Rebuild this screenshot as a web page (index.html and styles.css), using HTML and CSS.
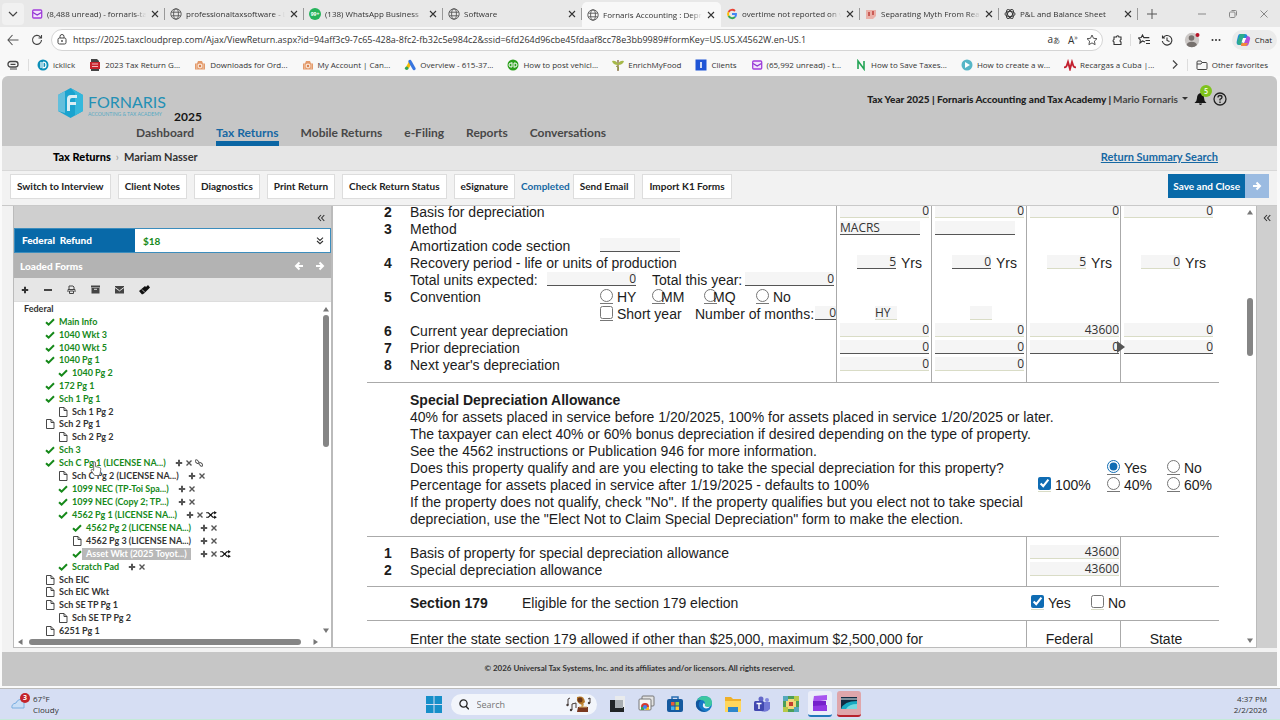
FILE: index.html
```html
<!DOCTYPE html>
<html lang="en">
<head>
<meta charset="utf-8">
<title>Fornaris Accounting : Depreciation</title>
<link rel="stylesheet" href="styles.css">
</head>
<body>
<svg class="defs" aria-hidden="true">
  <symbol id="check" viewBox="0 0 10 8"><path d="M1 4.200 3.600 6.600 9 1.200" fill="none" stroke="currentColor" stroke-width="2"/></symbol>
  <symbol id="page" viewBox="0 0 9 10"><path d="M1 .5h4.500L8.500 3.500V9.500H1zM5.500.5v3h3" fill="#fff" stroke="currentColor" stroke-width=".9"/></symbol>
  <symbol id="plus" viewBox="0 0 8 8"><path d="M4 .8v6.400M.8 4h6.400" stroke="currentColor" stroke-width="2"/></symbol>
  <symbol id="cross" viewBox="0 0 8 8"><path d="m1.500 1.500 5 5m0-5-5 5" stroke="currentColor" stroke-width="1.400"/></symbol>
  <symbol id="shuffle" viewBox="0 0 12 9"><path d="M0 2h2.500l5 5H10M0 7h2.500l5-5H10" fill="none" stroke="#111" stroke-width="1.300"/><path d="M9 0l3 2-3 2zM9 5l3 2-3 2z" fill="#111"/></symbol>
  <symbol id="link" viewBox="0 0 10 10"><rect x="-.2" y="1.800" width="5.400" height="3" rx="1.500" transform="rotate(45 2.500 3.300)" fill="none" stroke="currentColor" stroke-width="1.200"/><rect x="4.600" y="5.200" width="5.400" height="3" rx="1.500" transform="rotate(45 7.300 6.700)" fill="none" stroke="currentColor" stroke-width="1.200"/></symbol>
  <symbol id="x" viewBox="0 0 10 10"><path d="m2 2 6 6m0-6-6 6" stroke="#333" stroke-width="1.100"/></symbol>
  <symbol id="globe" viewBox="0 0 12 12"><g fill="none" stroke="#555" stroke-width=".9"><circle cx="6" cy="6" r="5.200"/><ellipse cx="6" cy="6" rx="2.400" ry="5.200"/><path d="M1.300 4.200h9.400M1.300 7.800h9.400"/></g></symbol>
  <symbol id="mail" viewBox="0 0 12 12"><rect x="1.700" y="2" width="9" height="8" rx="1" fill="#f3e3fb" stroke="#a23ddb" stroke-width="1.300"/><path d="m2 4.500 4.200 2.600 4.200-2.600" fill="none" stroke="#8c35d0" stroke-width="1.300"/></symbol>
  <symbol id="camera" viewBox="0 0 12 12"><path d="M1 4.500h2L4 2h4l1 2.500h2V10.500H1z" fill="#e39a6b"/><circle cx="6" cy="7" r="2.400" fill="#fbe7d8"/><circle cx="6" cy="7" r="1.200" fill="#d77f4d"/><path d="M2.800 5v5M9.200 5v5" stroke="#f6d2b8" stroke-width=".7"/></symbol>
  <symbol id="arrow" viewBox="0 0 10 10"><path d="M1 5h7M4.500 1.500 8 5 4.500 8.500" fill="none" stroke="currentColor" stroke-width="2"/></symbol>
  <symbol id="chev2" viewBox="0 0 8 8"><path d="M4 1 1.300 4 4 7M7.300 1 4.600 4l2.700 3" fill="none" stroke="currentColor" stroke-width="1.100"/></symbol>
  <symbol id="tri" viewBox="0 0 6 6"><path d="M3 1 6 5.500H0z" fill="#777"/></symbol>
</svg>

<header class="browser">
  <div class="tabs">
    <button class="tab-menu" aria-label="Tab actions"><svg width="10" height="8" viewBox="0 0 10 8"><path d="m1 2 4 4 4-4" fill="none" stroke="#444" stroke-width="1.200"/></svg></button>
    <div class="tab"><svg class="i12"><use href="#mail"/></svg><span>(8,488 unread) - fornaris-tax</span><svg class="i10"><use href="#x"/></svg></div>
    <div class="tab"><svg class="i12"><use href="#globe"/></svg><span>professionaltaxsoftware - Lo</span><svg class="i10"><use href="#x"/></svg></div>
    <div class="tab"><i class="wa">99+</i><span>(138) WhatsApp Business</span><svg class="i10"><use href="#x"/></svg></div>
    <div class="tab"><svg class="i12"><use href="#globe"/></svg><span>Software</span><svg class="i10"><use href="#x"/></svg></div>
    <div class="tab active"><svg class="i12"><use href="#globe"/></svg><span>Fornaris Accounting : Depre</span><svg class="i10"><use href="#x"/></svg></div>
    <div class="tab"><svg class="i12" viewBox="0 0 12 12"><g fill="none" stroke-width="1.900"><path d="M9 3A4 4 0 0 0 2.600 4" stroke="#ea4335"/><path d="M2.600 4a4 4 0 0 0 0 4" stroke="#fbbc05"/><path d="M2.600 8A4 4 0 0 0 9 9" stroke="#34a853"/><path d="M9 9a4 4 0 0 0 1-3H6" stroke="#4285f4"/></g></svg><span>overtime not reported on w2</span><svg class="i10"><use href="#x"/></svg></div>
    <div class="tab"><svg class="i12" viewBox="0 0 12 12"><path d="M1 2h10v6L8 11H1z" fill="#eab0a8"/><path d="M3 4h2v4H3zm4-1h2v4H7z" fill="#c95c56"/></svg><span>Separating Myth From Reali</span><svg class="i10"><use href="#x"/></svg></div>
    <div class="tab"><svg class="i12" viewBox="0 0 12 12"><g fill="none" stroke="#333" stroke-width=".9"><ellipse cx="6" cy="6" rx="5" ry="2.500"/><ellipse cx="6" cy="6" rx="5" ry="2.500" transform="rotate(60 6 6)"/><ellipse cx="6" cy="6" rx="5" ry="2.500" transform="rotate(120 6 6)"/></g></svg><span>P&amp;L and Balance Sheet</span><svg class="i10"><use href="#x"/></svg></div>
    <button class="new-tab" aria-label="New tab"><svg width="10" height="10" viewBox="0 0 10 10"><path d="M5 0v10M0 5h10" stroke="#555"/></svg></button>
    <div class="window-buttons">
      <button aria-label="Minimize"><svg width="8" height="8" viewBox="0 0 8 8"><path d="M0 4h8" stroke="#888"/></svg></button>
      <button aria-label="Restore"><svg width="8" height="8" viewBox="0 0 8 8"><g fill="none" stroke="#888"><rect x=".5" y="2" width="5.500" height="5.500" rx="1"/><path d="M2.500.5h4q1 0 1 1v4"/></g></svg></button>
      <button aria-label="Close"><svg width="8" height="8" viewBox="0 0 8 8"><path d="m.5.5 7 7m0-7-7 7" stroke="#888"/></svg></button>
    </div>
  </div>
  <div class="address-row">
    <button aria-label="Back"><svg width="12" height="12" viewBox="0 0 12 12"><path d="M11.500 6H1m4.500-5L1 6l4.500 5" fill="none" stroke="#555" stroke-width="1.100"/></svg></button>
    <button aria-label="Refresh"><svg width="12" height="12" viewBox="0 0 12 12"><path d="M10.500 6A4.500 4.500 0 1 1 9.300 2.800L10.500 4M10.500 1v3h-3" fill="none" stroke="#444" stroke-width="1.100"/></svg></button>
    <div class="address">
      <svg width="10" height="11" viewBox="0 0 10 11"><g fill="none" stroke="#444"><rect x="1" y="4" width="8" height="6" rx="1.500"/><path d="M3 4V2.500a2 2 0 0 1 4 0V4"/></g><circle cx="5" cy="7" r=".9" fill="#444"/></svg>
      <input type="text" aria-label="Address" value="https://2025.taxcloudprep.com/Ajax/ViewReturn.aspx?id=94aff3c9-7c65-428a-8fc2-fb32c5e984c2&amp;ssid=6fd264d96cbe45fdaaf8cc78e3bb9989#formKey=US.US.X4562W.en-US.1">
      <span class="glyph">a<small>あ</small></span><span class="glyph">A<sup>»</sup></span>
      <svg width="12" height="12" viewBox="0 0 12 12"><path d="m6 1 1.500 3.300 3.500.4-2.600 2.400.7 3.600L6 8.900l-3.100 1.800.7-3.600L1 4.700l3.500-.4z" fill="none" stroke="#555"/></svg>
    </div>
    <div class="address-tools">
      <svg width="12" height="12" viewBox="0 0 12 12"><path d="M3 3h2.500a1.200 1.200 0 0 1 2.400 0H10v2.500a1.300 1.300 0 0 0 0 2.500v2.500H3V8a1.300 1.300 0 0 1 0-2.500z" fill="none" stroke="#333" stroke-width="1.100"/></svg>
      <i class="sep"></i>
      <svg width="12" height="12" viewBox="0 0 12 12"><path d="M7 8 4.500 7 2 9l.3-3L.6 4l2.600-.4L4.500 1l1.300 2.600h5.500M7.500 6.500H12M8 9.500h4" fill="none" stroke="#333" stroke-width="1.100"/></svg>
      <svg width="12" height="12" viewBox="0 0 12 12"><path d="M1.800 4A4.800 4.800 0 1 1 1.300 7M1.500 1.500V4H4M6 3.500v3l2.500 1" fill="none" stroke="#333" stroke-width="1.100"/></svg>
      <svg width="16" height="16" viewBox="0 0 16 16"><circle cx="8" cy="8" r="7.200" fill="#ccc8c6"/><circle cx="7.500" cy="6" r="2.800" fill="#77716e"/><path d="M2.500 13a5.500 4.500 0 0 1 10.500 0 7 7 0 0 1-10.500 0" fill="#77716e"/><circle cx="13.500" cy="3" r="2" fill="#b51226"/></svg>
      <svg width="10" height="4" viewBox="0 0 10 4"><g fill="#333"><circle cx="1.500" cy="2" r="1"/><circle cx="5" cy="2" r="1"/><circle cx="8.500" cy="2" r="1"/></g></svg>
      <button class="chat"><svg width="15" height="14" viewBox="0 0 15 14"><path d="M4 1h5q2 0 2.500 2L12 5H8L6 12H3Q0 12 .8 8L2 3q.5-2 2-2" fill="#1d8bdc"/><path d="M4 1h5L6 12H4Q1 12 1 9z" fill="#34b96b" opacity=".7"/><path d="M11 3q3 0 3.200 2.500L13 10q-.6 3-3 3H6q-1.500 0-1-2l3-1z" fill="#b44fd8"/><path d="m6 10-1 1q-.5 2 1 2h4l2-3z" fill="#f28a3d"/><path d="M7 5h3L8 9.500H5.500z" fill="#fff"/></svg>Chat</button>
    </div>
  </div>
  <nav class="bookmarks" aria-label="Favorites">
    <svg width="12" height="10" viewBox="0 0 12 10"><rect x="1" y="1.500" width="10" height="5.500" rx="2.500" fill="none" stroke="#444" stroke-width="1.300"/><path d="M3.500 4.300h5M3 9h7" stroke="#444" stroke-width="1.200"/></svg>
    <i class="sep"></i>
    <a href="#"><svg class="i12" viewBox="0 0 12 12"><circle cx="6" cy="6" r="5.500" fill="#0c8fb8"/><path d="M4 3v6M6 3v6q3 0 3-3t-3-3" fill="none" stroke="#fff" stroke-width="1.200"/></svg>icklick</a>
    <a href="#"><svg class="i12" viewBox="0 0 12 12"><path d="M2 0h6l2 2v10H2z" fill="#444"/><path d="M1 3h10v7H1z" fill="#c8232c"/><path d="M3 5h6M3 7.500h6" stroke="#f2b5b8"/></svg>2023 Tax Return G...</a>
    <a href="#"><svg class="i12"><use href="#camera"/></svg>Downloads for Ord...</a>
    <a href="#"><svg class="i12"><use href="#camera"/></svg>My Account | Can...</a>
    <a href="#"><svg class="i12" viewBox="0 0 12 12"><path d="M6.500 3 3.500 8.500" stroke="#fbbc04" stroke-width="3.200"/><path d="m6 2.500 4 7" stroke="#3775e0" stroke-width="3.200" stroke-linecap="round"/><circle cx="2.700" cy="9.200" r="1.800" fill="#34a853"/></svg>Overview - 615-37...</a>
    <a href="#"><svg class="i12" viewBox="0 0 12 12"><circle cx="6" cy="6" r="5.500" fill="#2ca01c"/><path d="M5 4H4a2 2 0 0 0 0 4h1V3.500M7 8h1a2 2 0 0 0 0-4H7v4.500" fill="none" stroke="#fff"/></svg>How to post vehicl...</a>
    <a href="#"><svg class="i12" viewBox="0 0 12 12"><path d="M6 1v11" stroke="#795a2b" stroke-width="1.200"/><path d="M0 2q4-1 6 3 2-4 6-3-1 4-6 4-5 0-6-4" fill="#a6b94a"/><path d="M4 7q4 1 2 4" stroke="#8a9a32" fill="none"/></svg>EnrichMyFood</a>
    <a href="#"><svg class="i12" viewBox="0 0 12 12"><path d="M.5.5h11v11H.5z" fill="#1f55d6"/><path d="M6 3v6" stroke="#fff" stroke-width="1.600"/></svg>Clients</a>
    <a href="#"><svg class="i12"><use href="#mail"/></svg>(65,992 unread) - t...</a>
    <a href="#"><svg class="i12" viewBox="0 0 12 12"><path d="M3 10V2l6 8V2" fill="none" stroke="#23a455" stroke-width="1.600"/></svg>How to Save Taxes...</a>
    <a href="#"><svg class="i12" viewBox="0 0 12 12"><circle cx="6" cy="6" r="5.500" fill="#56b6c7"/><path d="m4 3 5 3-5 3z" fill="#fff"/></svg>How to create a w...</a>
    <a href="#"><svg class="i12" viewBox="0 0 12 12"><path d="M0 8q2 1 3-2l1-3 2 7 2-7 1 3q1 3 3 2" fill="none" stroke="#c3202f" stroke-width="1.900"/></svg>Recargas a Cuba |...</a>
    <svg class="more" width="6" height="9" viewBox="0 0 6 9"><path d="m1 .5 4 4-4 4" fill="none" stroke="#444" stroke-width="1.200"/></svg>
    <i class="sep"></i>
    <a href="#"><svg class="i12" viewBox="0 0 12 12"><path d="M1 3q0-1 1-1h3l1 1.500h4q1 0 1 1V9.500q0 1-1 1H2q-1 0-1-1zM1 5h4l1-1.500" fill="none" stroke="#444"/></svg>Other favorites</a>
  </nav>
</header>

<main class="app">
  <header class="app-head">
    <div class="brand-row">
      <div class="brand">
        <svg width="27" height="30" viewBox="0 0 27 30"><path d="M13.500 0 26 7v16l-12.500 7L1 23V7z" fill="#1aa3cf"/><path d="M13.500 0 26 7v16l-8 4.500V5z" fill="#35b8dc"/><path d="M1 7 8 3v22l-7-2z" fill="#63bfdc"/><path d="M10 23V11q0-4 4-4h6v3h-5q-2 0-2 2v2h6v3h-6v6z" fill="#d9eef5"/></svg>
        <div class="brand-text"><strong>FORNARIS</strong><small>ACCOUNTING &amp; TAX ACADEMY</small></div>
        <b class="year">2025</b>
      </div>
      <div class="account"><b>Tax Year 2025 | Fornaris Accounting and Tax Academy |</b><button>Mario Fornaris <svg width="6" height="4" viewBox="0 0 6 4"><path d="M0 0h6L3 3z" fill="#333"/></svg></button>
        <button class="bell" aria-label="Notifications"><svg width="13" height="14" viewBox="0 0 13 14"><path d="M6.500 1Q10 2 10 6q0 3 2.500 5H.5Q3 9 3 6q0-4 3.500-5M4.800 11.500h3.400q-1.700 3-3.400 0" fill="#161616"/></svg><span>5</span></button>
        <button aria-label="Help"><svg width="14" height="14" viewBox="0 0 14 14"><circle cx="7" cy="7" r="6" fill="none" stroke="#222" stroke-width="1.300"/><path d="M5 5.500q0-2 2-2t2 1.700Q9 6.500 7 7.300v1.200M7 9.500V11" fill="none" stroke="#222" stroke-width="1.300"/></svg></button>
      </div>
    </div>
    <nav class="main-nav"><a href="#">Dashboard</a><a href="#" class="current">Tax Returns</a><a href="#">Mobile Returns</a><a href="#">e-Filing</a><a href="#">Reports</a><a href="#">Conversations</a></nav>
  </header>
  <div class="crumbs"><span><b>Tax Returns</b><i>›</i>Mariam Nasser</span><a href="#">Return Summary Search</a></div>
  <div class="actions">
    <button>Switch to Interview</button><button>Client Notes</button><button>Diagnostics</button><button>Print Return</button><button>Check Return Status</button><button>eSignature</button><span class="done">Completed</span><button>Send Email</button><button>Import K1 Forms</button>
    <div class="save"><button>Save and Close</button><button class="next" aria-label="Next"><svg class="i10"><use href="#arrow"/></svg></button></div>
  </div>

  <div class="work">
    <aside class="side">
      <div class="collapse"><button aria-label="Collapse"><svg class="i8"><use href="#chev2"/></svg></button></div>
      <div class="refund"><b>Federal&nbsp; Refund</b><span>$18</span><svg class="i8 down"><use href="#chev2"/></svg></div>
      <div class="loaded"><b>Loaded Forms</b><svg class="i10 flip"><use href="#arrow"/></svg><svg class="i10"><use href="#arrow"/></svg></div>
      <div class="tools">
        <button aria-label="Add"><svg class="i8"><use href="#plus"/></svg></button>
        <button aria-label="Remove"><svg class="i8" viewBox="0 0 8 8"><path d="M0 4h8" stroke="#444" stroke-width="2"/></svg></button>
        <button aria-label="Print"><svg class="i9" viewBox="0 0 9 9"><path d="M2 4V1h4l1 1v2M1 7V4.500h7V7M2.500 6h4v2.500h-4z" fill="none" stroke="#444"/></svg></button>
        <button aria-label="Archive"><svg class="i9" viewBox="0 0 9 9"><path d="M0 .5h9v2H0zM.5 3h8v5.500h-8z" fill="#444"/><path d="M3 4.300h3" stroke="#ddd"/></svg></button>
        <button aria-label="Mail"><svg class="i9" viewBox="0 0 9 9"><path d="M0 1h9v7.500H0z" fill="#444"/><path d="m0 2.500 4.500 3.300L9 2.500" fill="none" stroke="#e6e6e6"/></svg></button>
        <button aria-label="Erase"><svg width="11" height="11" viewBox="0 0 11 11"><path d="M0 7 6 2l1 1 2-2 2 2.500-6 6-2 1z" fill="#111"/><path d="m3 5.500 3 3" stroke="#ddd" stroke-width=".8"/></svg></button>
      </div>
      <div class="tree-wrap">
        <ul class="tree">
          <li class="root">Federal</li>
          <li class="ok"><svg><use href="#check"/></svg>Main Info</li>
          <li class="ok"><svg><use href="#check"/></svg>1040 Wkt 3</li>
          <li class="ok"><svg><use href="#check"/></svg>1040 Wkt 5</li>
          <li class="ok"><svg><use href="#check"/></svg>1040 Pg 1</li>
          <li class="ok l2"><svg><use href="#check"/></svg>1040 Pg 2</li>
          <li class="ok"><svg><use href="#check"/></svg>172 Pg 1</li>
          <li class="ok"><svg><use href="#check"/></svg>Sch 1 Pg 1</li>
          <li class="l2"><svg><use href="#page"/></svg>Sch 1 Pg 2</li>
          <li><svg><use href="#page"/></svg>Sch 2 Pg 1</li>
          <li class="l2"><svg><use href="#page"/></svg>Sch 2 Pg 2</li>
          <li class="ok"><svg><use href="#check"/></svg>Sch 3</li>
          <li class="ok t"><svg><use href="#check"/></svg>Sch C Pg 1 (LICENSE NA...)<span><svg><use href="#plus"/></svg><svg><use href="#cross"/></svg><svg><use href="#link"/></svg></span>
            <svg class="hand" viewBox="0 0 12 16"><path d="M3.500 10V2q0-1.200 1-1.200T5.500 2v4l4 .8q1.800.4 1.600 2L10.500 13l-1 2.500h-5L1 10.500q-.6-1.200.5-1.500t2 1" fill="#fff" stroke="#666"/></svg></li>
          <li class="l2 t"><svg><use href="#page"/></svg>Sch C Pg 2 (LICENSE NA...)<span><svg><use href="#plus"/></svg><svg><use href="#cross"/></svg></span></li>
          <li class="ok l2 t"><svg><use href="#check"/></svg>1099 NEC (TP-Toi Spa...)<span><svg><use href="#plus"/></svg><svg><use href="#cross"/></svg></span></li>
          <li class="ok l2 t"><svg><use href="#check"/></svg>1099 NEC (Copy 2; TP...)<span><svg><use href="#plus"/></svg><svg><use href="#cross"/></svg></span></li>
          <li class="ok l2 t"><svg><use href="#check"/></svg>4562 Pg 1 (LICENSE NA...)<span><svg><use href="#plus"/></svg><svg><use href="#cross"/></svg><svg class="wide"><use href="#shuffle"/></svg></span></li>
          <li class="ok l3 t"><svg><use href="#check"/></svg>4562 Pg 2 (LICENSE NA...)<span><svg><use href="#plus"/></svg><svg><use href="#cross"/></svg></span></li>
          <li class="l3 t"><svg><use href="#page"/></svg>4562 Pg 3 (LICENSE NA...)<span><svg><use href="#plus"/></svg><svg><use href="#cross"/></svg></span></li>
          <li class="ok l3 t"><svg><use href="#check"/></svg><mark>Asset Wkt (2025 Toyot...)</mark><span><svg><use href="#plus"/></svg><svg><use href="#cross"/></svg><svg class="wide"><use href="#shuffle"/></svg></span></li>
          <li class="ok l2 t"><svg><use href="#check"/></svg>Scratch Pad<span><svg><use href="#plus"/></svg><svg><use href="#cross"/></svg></span></li>
          <li><svg><use href="#page"/></svg>Sch EIC</li>
          <li><svg><use href="#page"/></svg>Sch EIC Wkt</li>
          <li><svg><use href="#page"/></svg>Sch SE TP Pg 1</li>
          <li class="l2"><svg><use href="#page"/></svg>Sch SE TP Pg 2</li>
          <li><svg><use href="#page"/></svg>6251 Pg 1</li>
        </ul>
        <div class="vbar"><svg class="i6"><use href="#tri"/></svg><i class="thumb side-thumb"></i><svg class="i6 half"><use href="#tri"/></svg></div>
      </div>
      <div class="hbar"><svg class="i6 left"><use href="#tri"/></svg><i></i><svg class="i6 right"><use href="#tri"/></svg></div>
    </aside>

    <section class="pane">
      <form class="sheet">
        <div class="block asset">
          <div class="row"><b>2</b><span>Basis for depreciation</span><div><input class="calc" aria-label="Basis 1" value="0"></div><div><input class="calc" aria-label="Basis 2" value="0"></div><div><input class="calc" aria-label="Basis 3" value="0"></div><div><input class="calc" aria-label="Basis 4" value="0"></div></div>
          <div class="row"><b>3</b><span>Method</span><div><input class="text" aria-label="Method 1" value="MACRS"></div><div><input class="text" aria-label="Method 2"></div><div></div><div></div></div>
          <div class="row"><b></b><span><label class="w190" for="amort">Amortization code section</label><input class="w80" id="amort"></span><div></div><div></div><div></div><div></div></div>
          <div class="row"><b>4</b><span>Recovery period - life or units of production</span><div class="yrs"><input id="y1" value="5"><label for="y1">Yrs</label></div><div class="yrs"><input id="y2" value="0"><label for="y2">Yrs</label></div><div class="yrs"><input class="calc" id="y3" value="5"><label for="y3">Yrs</label></div><div class="yrs"><input class="calc" id="y4" value="0"><label for="y4">Yrs</label></div></div>
          <div class="row"><b></b><span><label class="w137" for="units">Total units expected:</label><input id="units" value="0"><label class="this-year" for="ty">Total this year:</label><input id="ty" value="0"></span><div></div><div></div><div></div><div></div></div>
          <div class="row"><b>5</b><span><span class="w190">Convention</span><label class="opt"><input type="radio" name="conv">HY</label><label class="opt tight"><input type="radio" name="conv">MM</label><label class="opt tight"><input type="radio" name="conv">MQ</label><label class="opt"><input type="radio" name="conv">No</label></span><div></div><div></div><div></div><div></div></div>
          <div class="row"><b></b><span class="short"><label class="opt"><input type="checkbox">Short year</label><label for="months">Number of months:</label><input class="w20" id="months" value="0"></span><div class="code"><input class="calc" aria-label="Convention 1" value="HY"></div><div class="code"><input class="calc" aria-label="Convention 2"></div><div></div><div></div></div>
          <div class="row"><b>6</b><span>Current year depreciation</span><div><input class="calc" aria-label="Current 1" value="0"></div><div><input class="calc" aria-label="Current 2" value="0"></div><div><input class="calc" aria-label="Current 3" value="43600"></div><div><input class="calc" aria-label="Current 4" value="0"></div></div>
          <div class="row"><b>7</b><span>Prior depreciation</span><div><input aria-label="Prior 1" value="0"></div><div><input aria-label="Prior 2" value="0"></div><div><input aria-label="Prior 3" value="0"><i class="marker"></i></div><div><input aria-label="Prior 4" value="0"></div></div>
          <div class="row last"><b>8</b><span>Next year's depreciation</span><div><input class="calc" aria-label="Next 1" value="0"></div><div><input class="calc" aria-label="Next 2" value="0"></div><div></div><div></div></div>
        </div>
        <div class="block special">
          <h2>Special Depreciation Allowance</h2>
          <p>40% for assets placed in service before 1/20/2025, 100% for assets placed in service 1/20/2025 or later.</p>
          <p>The taxpayer can elect 40% or 60% bonus depreciation if desired depending on the type of property.</p>
          <p>See the 4562 instructions or Publication 946 for more information.</p>
          <div class="choice"><span>Does this property qualify and are you electing to take the special depreciation for this property?</span><i></i><label class="opt"><input type="radio" name="q" checked>Yes</label><label class="opt"><input type="radio" name="q">No</label></div>
          <div class="choice"><span>Percentage for assets placed in service after 1/19/2025 - defaults to 100%</span><label class="opt light"><input type="checkbox" checked>100%</label><label class="opt"><input type="radio" name="pct">40%</label><label class="opt"><input type="radio" name="pct">60%</label></div>
          <p>If the property does not qualify, check "No". If the property qualifies but you elect not to take special</p>
          <p>depreciation, use the "Elect Not to Claim Special Depreciation" form to make the election.</p>
        </div>
        <div class="block basis">
          <div class="row2 first"><b>1</b><span>Basis of property for special depreciation allowance</span><div><input class="calc" aria-label="Basis of property" value="43600"></div><div></div></div>
          <div class="row2 last"><b>2</b><span>Special depreciation allowance</span><div><input class="calc" aria-label="Special allowance" value="43600"></div><div></div></div>
        </div>
        <div class="block s179"><b>Section 179</b><span>Eligible for the section 179 election</span><label class="opt light"><input type="checkbox" checked>Yes</label><label class="opt light"><input type="checkbox">No</label></div>
        <div class="state-row row2"><b></b><span>Enter the state section 179 allowed if other than $25,000, maximum $2,500,000 for</span><div>Federal</div><div>State</div></div>
      </form>
      <div class="vbar"><svg class="i6"><use href="#tri"/></svg><i class="thumb pane-thumb"></i><svg class="i6 half"><use href="#tri"/></svg></div>
    </section>
    <aside class="rail"><button aria-label="Expand"><svg class="i8"><use href="#chev2"/></svg></button></aside>
  </div>
  <footer>© 2026 Universal Tax Systems, Inc. and its affiliates and/or licensors. All rights reserved.</footer>
</main>

<div class="taskbar">
  <div class="weather"><div class="cloud"><svg width="20" height="18" viewBox="0 0 20 18"><path d="M1 15q-1-4 4-5 2-5 8-3v8z" fill="#c9def6" stroke="#7aaee0"/></svg><b>3</b></div><span>67°F<br>Cloudy</span></div>
  <div class="apps">
    <svg width="16" height="17" viewBox="0 0 16 17"><path d="M0 0h7.500v8H0zM8.500 0H16v8H8.500zM0 9h7.500v8H0zM8.500 9H16v8H8.500z" fill="#168fc9"/></svg>
    <div class="search"><svg width="10" height="11" viewBox="0 0 10 11"><circle cx="4.500" cy="4.500" r="3.600" fill="none" stroke="#222" stroke-width="1.300"/><path d="m7 7.200 2.800 3.200" stroke="#222" stroke-width="1.400"/></svg><input type="text" aria-label="Search" placeholder="Search"><svg width="26" height="18" viewBox="0 0 26 18"><path d="M2 10V4l2-1M6 15V9l4-1v5M24 8V3l-2 1" fill="none" stroke="#443a38"/><circle cx="1.500" cy="10" r="1.200" fill="#443a38"/><circle cx="5" cy="15" r="1.200" fill="#443a38"/><circle cx="23" cy="8" r="1.200" fill="#443a38"/><path d="M11 2q7-2 8 5l-3 3q-6-2-5-8" fill="#b77928"/><circle cx="14" cy="5" r="2.500" fill="#6b3719"/><path d="m17 9-1 3" stroke="#c99544" stroke-width="2"/><path d="M12 12h10v5H11z" fill="#7b3820"/><path d="M13 12h8" stroke="#d9b06d"/></svg></div>
    <svg viewBox="0 0 18 18"><path d="M7 1h10v13H7z" fill="#e9ebed"/><path d="M2 5h5v7h9v5H2z" fill="#202326"/><path d="M7 5h8v8H7z" fill="#a8adb1"/></svg>
    <svg viewBox="0 0 18 18"><rect x="5" y="1" width="12" height="10" rx="1" fill="#e3e3e3" stroke="#777"/><rect x="2" y="4" width="12" height="11" rx="1" fill="#f7f7f7" stroke="#777"/><path d="M4 12a4 4 0 0 1 8 0z" fill="#d33a2f"/><path d="M4 12h3v3H4z" fill="#3aa757"/><path d="M9 12h3v3H9z" fill="#f3b91f"/><circle cx="8" cy="12" r="2" fill="#4285f4"/></svg>
    <svg viewBox="0 0 18 18"><path d="M6 5V2h6v3" fill="none" stroke="#2b6fb2" stroke-width="1.500"/><rect x="1" y="4" width="16" height="13" rx="2" fill="#15599f"/><path d="M5 7h3.500v3.500H5z" fill="#e95939"/><path d="M9.500 7H13v3.500H9.500z" fill="#8fce3f"/><path d="M5 11.500h3.500V15H5z" fill="#43b4ef"/><path d="M9.500 11.500H13V15H9.500z" fill="#f8cb3b"/></svg>
    <svg viewBox="0 0 18 18"><circle cx="9" cy="9" r="8" fill="#1679c7"/><path d="M1 8Q3 1 9 1q8 0 8 7 0 4-5 4-3 0-2-3 0-4-4-4-3 0-5 3" fill="#3dc7a1"/><path d="M6 5q-4 4-1 8 3 4 8 3-5 2-9-1-4-3-3-8 2-3 5-2" fill="#12549e"/><path d="M10 9q-1 3 3 3l2-.5q-1 2-4 2-4-1-3-4 0-2 2-.5" fill="#e7f2fb"/></svg>
    <svg viewBox="0 0 18 18"><path d="M1 2h6l2 2h8v13H1z" fill="#eeb02b"/><path d="M1 6h16v11H1z" fill="#ffd65c"/><path d="M4 12h10v5H4z" fill="#2d86cb"/></svg>
    <svg viewBox="0 0 18 18"><circle cx="8" cy="4" r="2.500" fill="#6368c8"/><circle cx="14" cy="5" r="2" fill="#8288df"/><path d="M4 7h13v7q-3 4-9 2z" fill="#7379d6"/><rect x="1" y="6" width="10" height="10" rx="1.500" fill="#4148b0"/><path d="M3.500 8.500h5M6 8.500V14" stroke="#fff" stroke-width="1.400"/></svg>
    <svg viewBox="0 0 18 18"><path d="M1 1h16v16H1z" fill="#4b9f58"/><path d="M1 1h5v5H1zM12 12h5v5h-5z" fill="#55a9bc"/><path d="M12 1h5v5h-5zM1 12h5v5H1z" fill="#b7c948"/><path d="M6 4h6v10H6zM4 6h10v6H4z" fill="#f2d77b"/><path d="M7 7h4v4H7z" fill="#c33f31"/></svg>
    <div class="app-on"><svg viewBox="0 0 18 18"><path d="M3 2 16 1v5L2 8z" fill="#a855ef"/><path d="M2 7h13v5H2z" fill="#7421cb"/><path d="m2 12 14-1v6H2z" fill="#9139e4"/></svg></div>
    <div class="app-on red"><svg viewBox="0 0 18 18"><path d="M1 3h16v12H1z" fill="#112c43"/><path d="M1 15q3-8 16-8v8z" fill="#18a9c2"/><path d="M6 15q3-5 11-5v5z" fill="#75dae0"/><path d="M1 5h16" stroke="#e8f1f4"/></svg></div>
  </div>
  <div class="clock">4:37 PM<br>2/2/2026</div>
</div>
</body>
</html>
```
FILE: styles.css
```css
* { box-sizing: border-box; }
body { margin: 0; min-height: 100vh; height: 100vh; display: flex; flex-direction: column; background: #fafafa; font-family: "Open Sans", "Noto Sans", sans-serif; font-size: 8px; color: #333; overflow: hidden; }
button { border: 0; padding: 0; background: none; font: inherit; color: inherit; display: inline-flex; align-items: center; justify-content: center; }
input { font: inherit; color: inherit; border: 0; outline: 0; background: none; padding: 0; margin: 0; min-width: 0; border-radius: 0; }
a { color: inherit; text-decoration: none; }
svg { flex: none; display: block; }
.defs { position: absolute; width: 0; height: 0; }
.i12 { width: 12px; height: 12px; }
.i10 { width: 10px; height: 10px; }
.i9 { width: 9px; height: 9px; }
.i8 { width: 8px; height: 8px; }
.i6 { width: 6px; height: 6px; }
.flip, .half { transform: rotate(180deg); }
.down, .left { transform: rotate(-90deg); }
.right { transform: rotate(90deg); }
.sep { width: 1px; height: 12px; background: #ddd; }

/* Browser chrome */
.browser { flex: none; }
.tabs { display: flex; align-items: center; height: 27px; background: #e8e8e8; padding: 0 8px 0 2px; }
.tab-menu { width: 22px; height: 22px; border-radius: 4px; background: #f1f1f1; margin-right: 2px; }
.tab { flex: 0 1 139px; min-width: 0; height: 24px; display: flex; align-items: center; gap: 4px; padding: 0 5px; }
.tab:not(.active) { background: linear-gradient(#999, #999) right center / 1px 12px no-repeat; }
.tab span { flex: 1; min-width: 0; white-space: nowrap; overflow: hidden; mask-image: linear-gradient(90deg, #000 88%, transparent); }
.tab.active { background: #f8f8f8; border-radius: 5px 5px 0 0; height: 25px; align-self: flex-end; }
.wa { width: 12px; height: 12px; border-radius: 6px; background: #25b35a; color: #fff; font: bold 5px/12px "Open Sans", sans-serif; text-align: center; }
.new-tab { width: 28px; height: 24px; }
.window-buttons { margin-left: auto; display: flex; gap: 23px; padding-right: 4px; }
.address-row { display: flex; align-items: center; height: 26px; background: #f8f8f8; padding: 0 3px 1px 7px; gap: 12px; }
.address { flex: 1; display: flex; align-items: center; gap: 8px; height: 22px; padding: 0 4px 0 5px; border: 1px solid #d5d5d5; border-radius: 11px; background: #fff; margin: 0 -4px; }
.address input { flex: 1; font-size: 9px; }
.address svg:first-child { margin-right: -2px; }
.glyph { font-size: 10px; line-height: 12px; }
.glyph small { font-family: "Noto Sans CJK JP", sans-serif; font-size: 7px; }
.glyph sup { font-size: 7px; line-height: 0; }
.address-tools { display: flex; align-items: center; gap: 11px; }
.address-tools .sep { margin: 0 -4px; }
.chat { gap: 4px; height: 20px; padding: 0 5px 0 4px; border-radius: 10px; background: #ebebeb; color: #222; }
.bookmarks { display: flex; align-items: center; height: 23px; padding: 0 12px 0 7px; background: #f8f8f8; gap: 14px; white-space: nowrap; }
.bookmarks a { display: flex; align-items: center; gap: 4px; }
.bookmarks > .sep { margin: 0 -6px 0 -5px; }
.bookmarks .more { margin-left: auto; }

/* Application frame */
.app { flex: 1; min-height: 0; display: flex; flex-direction: column; margin: 0 3px 0 2px; background: #f2f2f2; border-radius: 6px 6px 0 0; overflow: hidden; font-family: Lato, "Open Sans", sans-serif; font-size: 10px; }
.app-head { background: #c6c6c6; padding: 0 50px; }
.brand-row { display: flex; justify-content: space-between; height: 48px; }
.brand { display: flex; align-items: flex-end; gap: 4px; padding: 0 0 0 5px; }
.brand > svg { margin-bottom: 6px; }
.brand-text { display: flex; flex-direction: column; margin-bottom: 7px; color: #2390b5; }
.brand-text strong { font-weight: 400; font-size: 16px; line-height: 18px; }
.brand-text small { font-size: 5px; line-height: 6px; color: #55a9c4; }
.year { font-size: 12px; line-height: 14px; color: #161616; margin-left: 4px; }
.account { display: flex; align-items: center; height: 45px; gap: 4px; font-weight: 700; color: #444; }
.account b { color: #222; }
.account > b { margin-right: -2px; }
.account button { gap: 4px; }
.bell { position: relative; margin: 0 2px; }
.bell span { position: absolute; left: 6px; top: -7px; width: 12px; height: 12px; border-radius: 6px; background: #7fc31c; color: #fff; font-size: 7px; line-height: 12px; }
.main-nav { display: flex; gap: 22px; padding-left: 84px; font-size: 12px; font-weight: 700; line-height: 17px; color: #484848; }
.main-nav a { height: 22px; }
.main-nav .current { color: #1668a3; border-bottom: 5px solid #0b66a4; }
.crumbs { display: flex; justify-content: space-between; align-items: center; height: 25px; padding: 0 59px 3px 51px; background: #e6e6e6; border-bottom: 1px solid #d8d8d8; font-size: 11px; font-weight: 700; color: #333; }
.crumbs b { color: #000; }
.crumbs i { font-style: normal; color: #999; margin: 0 5px; font-weight: 400; }
.crumbs a { color: #1668a3; text-decoration: underline; }
.actions { display: flex; align-items: center; gap: 7px; height: 35px; padding: 0 8px 4px; color: #222; font-weight: 700; border-bottom: 1px solid #c9c9c9; white-space: nowrap; }
.actions > button { height: 25px; padding: 0 6px; background: #fff; border: 1px solid #ddd; }
.done { color: #1668a3; margin: 0 -4px 0 -1px; }
.save { margin-left: auto; display: flex; height: 24px; color: #fff; }
.save button { background: #0869a8; padding: 0 5px; }
.save .next { background: #9bbbe1; width: 24px; }

.work { flex: 1; min-height: 0; display: flex; }
.side { flex: 0 0 320px; margin-left: 11px; display: flex; flex-direction: column; border: 1px solid #bbb; border-width: 0 2px 1px 1px; background: #fff; font-weight: 700; }
.collapse { display: flex; justify-content: flex-end; height: 22px; padding-right: 6px; background: #cfcfcf; }
.refund { display: flex; align-items: center; height: 25px; border: 1px solid #3c8dbd; padding-right: 6px; }
.refund b { width: 120px; align-self: stretch; padding-left: 7px; line-height: 22px; background: #0869a8; color: #fff; }
.refund span { flex: 1; padding-left: 8px; color: #16891a; }
.loaded { display: flex; align-items: center; gap: 11px; height: 25px; padding: 0 6px; background: #b3b3b3; color: #fff; }
.loaded b { flex: 1; }
.tools { display: flex; align-items: center; gap: 15px; height: 24px; padding: 0 7px; background: #e6e6e6; border-bottom: 1px solid #ddd; }
.tree-wrap { flex: 1; min-height: 0; display: flex; padding-top: 1px; }
.tree { flex: 1; list-style: none; margin: 0; padding: 0 0 0 31px; display: flex; flex-direction: column; max-height: 335px; font-size: 9px; }
.tree li { position: relative; flex: 1 1 12px; display: flex; align-items: center; gap: 4px; line-height: 12px; white-space: nowrap; }
.tree li > svg { width: 10px; height: 10px; }
.tree .t { flex: 0 0 13px; }
.tree .root { margin-left: -21px; }
.tree .ok { color: #16891a; }
.tree .ok > svg { height: 8px; }
.tree .l2 { margin-left: 13px; }
.tree .l3 { margin-left: 27px; }
.tree li span { display: flex; gap: 2px; margin-left: 5px; color: #555; }
.tree li span svg { width: 8px; height: 8px; }
.tree li span .wide { width: 11px; }
.tree mark { margin-left: -4px; padding: 0 4px; background: #b8b8b8; color: #fff; }
.tree li > .hand { position: absolute; left: 45px; top: 5px; width: 12px; height: 15px; z-index: 1; }
.vbar { width: 12px; display: flex; flex-direction: column; align-items: center; padding: 3px 0; }
.side .vbar { width: 10px; }
.thumb { width: 6px; border-radius: 3px; background: #858585; }
.side-thumb { height: 132px; margin: 3px 0 auto; }
.hbar { display: flex; align-items: center; gap: 6px; height: 10px; padding: 0 12px 0 3px; }
.hbar i { flex: 1; height: 6px; border-radius: 3px; background: #858585; margin-right: 6px; }

/* Depreciation worksheet */
.pane { flex: 1; min-width: 0; display: flex; background: #fff; border-bottom: 1px solid #bbb; overflow: hidden; }
.pane-thumb { height: 58px; margin: 83px 0 auto; }
.sheet { flex: 1; min-width: 0; margin: -2px 25px 0 34px; font: 14px/17px "Liberation Sans", Arial, sans-serif; color: #1c1c1c; }
.sheet input { height: 14px; width: 89px; font: 12px/13px "Open Sans", sans-serif; text-align: right; background: #f5f5f5; border-bottom: 1px solid #555; color: #333; }
.sheet input.calc { border-bottom-color: #d9dcc6; }
.block { border-bottom: 1px solid #aaa; }
.row { display: grid; grid-template-columns: 43px minmax(0, 1fr) 95px 95px 94px 99px; height: 17px; }
.row2 { display: grid; grid-template-columns: 43px minmax(0, 1fr) 94px 99px; height: 17px; }
.row > b, .row2 > b { padding-left: 17px; }
.row > span, .row2 > span { display: flex; white-space: nowrap; }
.row > div, .row2 > div { position: relative; border-left: 1px solid #aaa; padding-left: 3px; display: flex; align-items: flex-start; }
.row.last { height: 25px; }
.sheet .text { width: 80px; text-align: left; }
.w190 { width: 190px; }
.w137 { width: 137px; }
.sheet .w80 { width: 80px; }
.sheet .w20 { width: 21px; }
.this-year { width: 93px; margin-left: 16px; }
.yrs { gap: 5px; }
.row > .yrs { padding-left: 20px; }
.sheet .yrs input { width: 39px; }
.row > .code { padding-left: 38px; }
.sheet .code input { width: 22px; text-align: left; }
.opt { display: flex; gap: 4px; width: 52px; white-space: nowrap; background: linear-gradient(#777, #777) 0 14px / 13px 1px no-repeat; }
.opt.light { background-image: linear-gradient(#d9dcc6, #d9dcc6); }
.sheet .opt input { width: 13px; height: 13px; accent-color: #0f6cb3; flex: none; }
.tight { gap: 0; }
.tight input { margin-right: -4px; }
.short { padding-left: 190px; }
.short .opt { width: 95px; }
.short label + input { margin-left: auto; }
.marker { position: absolute; z-index: 1; right: -5px; top: 1px; border: 6px solid transparent; border-left: 8px solid #555; border-right: 0; }
.special { padding: 9px 0 8px 43px; white-space: nowrap; }
.special h2 { margin: 0; font-size: 14px; line-height: 17px; }
.special p { margin: 0; }
.choice { display: grid; grid-template-columns: minmax(0, 1fr) 69px 60px 52px; height: 17px; }
.row2.first { height: 25px; }
.row2.first > * { padding-top: 8px; }
.row2.last { height: 24px; }
.s179 { display: grid; grid-template-columns: 112px minmax(0, 1fr) 60px 128px; padding: 8px 0 8px 43px; }
.state-row { height: 30px; line-height: 36px; }
.state-row > div { justify-content: center; padding: 0 8px 0 0; }
.rail { width: 21px; background: #cfcfcf; border-left: 1px solid #bbb; text-align: center; }
.rail button, .collapse button { height: 24px; }
.app footer { height: 34px; margin-top: 4px; background: #c6c6c6; text-align: center; font-size: 8px; font-weight: 700; line-height: 32px; color: #333; }

/* Desktop taskbar */
.taskbar { flex: none; display: grid; grid-template-columns: 1fr auto 1fr; align-items: center; height: 32px; margin-top: 2px; border-top: 1px solid #bbb; border-bottom: 1px solid #c4ead8; background: #d6def3; line-height: 11px; }
.weather { display: flex; gap: 2px; padding-left: 11px; }
.cloud { position: relative; }
.cloud b { position: absolute; left: 9px; top: 0; width: 10px; height: 10px; border-radius: 5px; background: #c4242b; color: #fff; font-size: 7px; line-height: 10px; text-align: center; }
.apps { display: flex; align-items: center; gap: 11px; padding-left: 3px; }
.apps > svg:not(:first-child), .app-on svg { width: 18px; height: 18px; }
.search { display: flex; align-items: center; gap: 8px; width: 146px; height: 21px; padding: 0 5px 0 8px; margin-left: -2px; border-radius: 11px; background: #f2f5fb; font-size: 9px; }
.search input { flex: 1; }
.app-on { width: 24px; height: 26px; margin: 0 -3px; padding: 3px; border-radius: 3px; background: #ebeef9; border-bottom: 2px solid #2277ba; }
.app-on.red { background: #dfa6ab; border-color: #b7222c; }
.clock { text-align: right; padding-right: 13px; }
```
